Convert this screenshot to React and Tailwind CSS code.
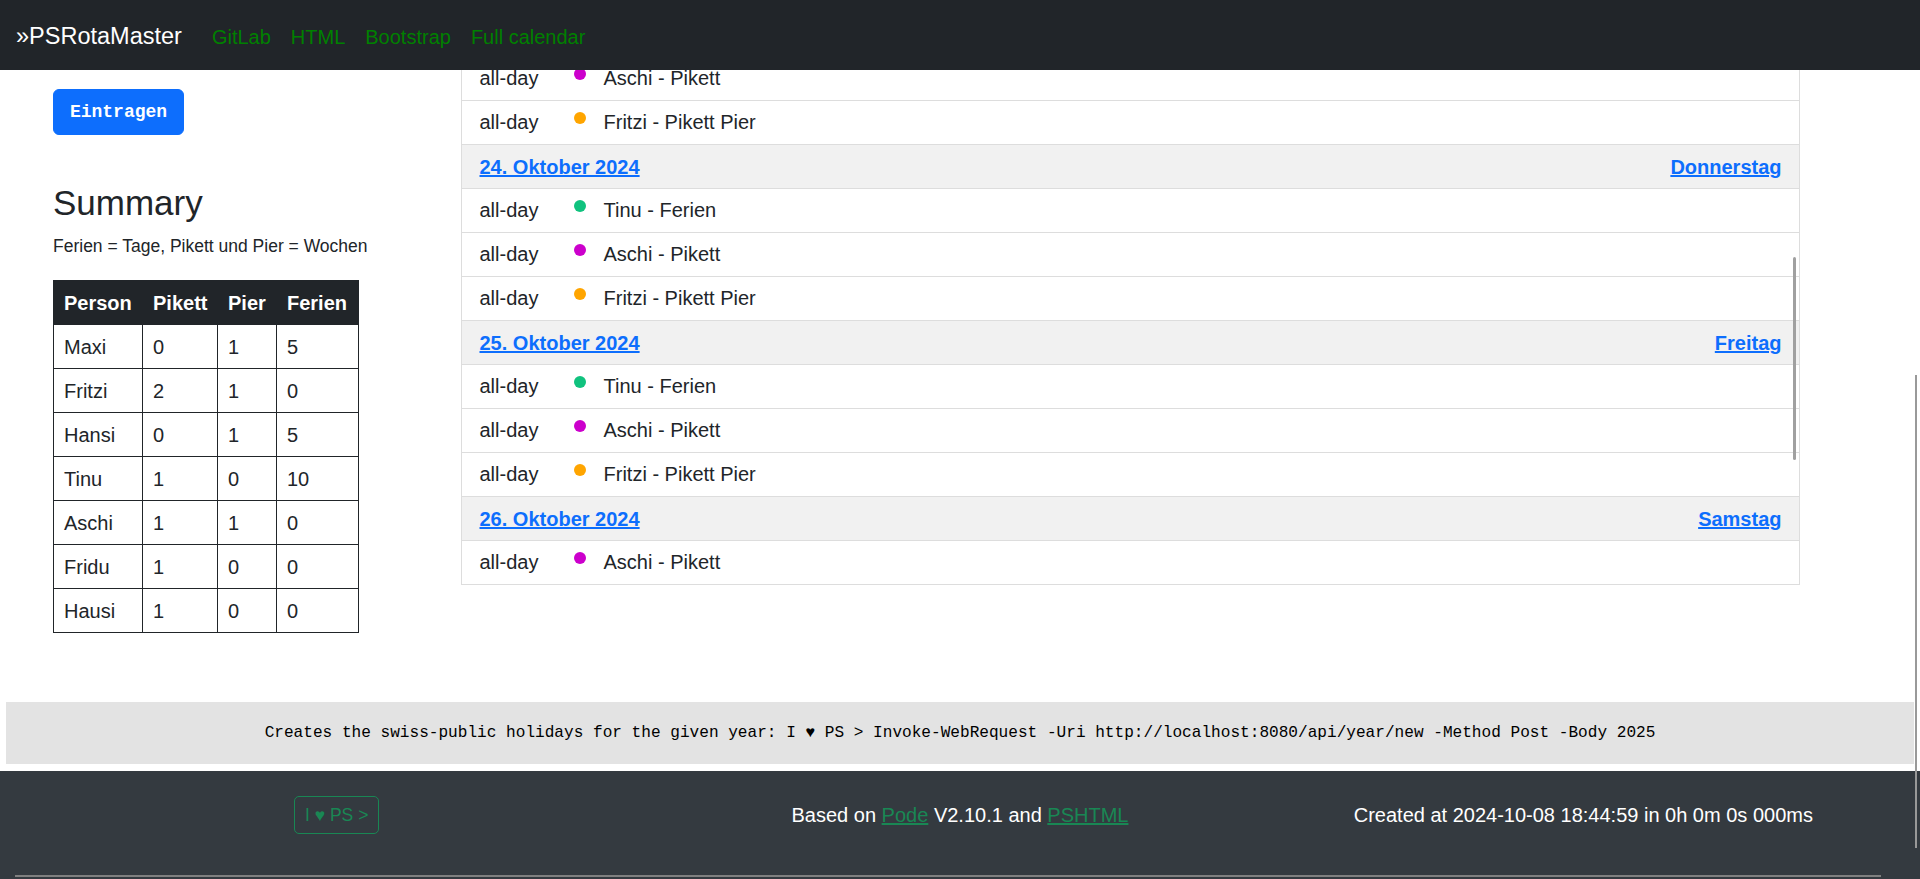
import React from 'react';

const MAGENTA = '#cc00cc';
const ORANGE = '#ffa500';
const GREEN = '#10c27e';

const summary = [
  { name: 'Maxi', pikett: 0, pier: 1, ferien: 5 },
  { name: 'Fritzi', pikett: 2, pier: 1, ferien: 0 },
  { name: 'Hansi', pikett: 0, pier: 1, ferien: 5 },
  { name: 'Tinu', pikett: 1, pier: 0, ferien: 10 },
  { name: 'Aschi', pikett: 1, pier: 1, ferien: 0 },
  { name: 'Fridu', pikett: 1, pier: 0, ferien: 0 },
  { name: 'Hausi', pikett: 1, pier: 0, ferien: 0 },
];

const listRows = [
  { kind: 'event', title: 'Aschi - Pikett', color: MAGENTA },
  { kind: 'event', title: 'Fritzi - Pikett Pier', color: ORANGE },
  { kind: 'day', date: '24. Oktober 2024', weekday: 'Donnerstag' },
  { kind: 'event', title: 'Tinu - Ferien', color: GREEN },
  { kind: 'event', title: 'Aschi - Pikett', color: MAGENTA },
  { kind: 'event', title: 'Fritzi - Pikett Pier', color: ORANGE },
  { kind: 'day', date: '25. Oktober 2024', weekday: 'Freitag' },
  { kind: 'event', title: 'Tinu - Ferien', color: GREEN },
  { kind: 'event', title: 'Aschi - Pikett', color: MAGENTA },
  { kind: 'event', title: 'Fritzi - Pikett Pier', color: ORANGE },
  { kind: 'day', date: '26. Oktober 2024', weekday: 'Samstag' },
  { kind: 'event', title: 'Aschi - Pikett', color: MAGENTA },
];

const Navbar = () => (
  <nav className="relative z-10 flex h-[70px] items-center bg-[#212529] pl-[16px] pt-[4px]">
    <span className="mr-[20px] text-[23.5px] text-white">»PSRotaMaster</span>
    {['GitLab', 'HTML', 'Bootstrap', 'Full calendar'].map((link) => (
      <a key={link} className="px-[10px] text-[20px] text-[#008000]">
        {link}
      </a>
    ))}
  </nav>
);

const SummaryTable = () => (
  <table className="w-[306px] table-fixed border-collapse text-[20px] text-[#212529]">
    <thead>
      <tr className="bg-[#212529] text-white">
        <th className="h-[44px] w-[89px] border border-[#212529] px-[10px] text-left font-bold">Person</th>
        <th className="h-[44px] w-[75px] border border-[#212529] px-[10px] text-left font-bold">Pikett</th>
        <th className="h-[44px] w-[59px] border border-[#212529] px-[10px] text-left font-bold">Pier</th>
        <th className="h-[44px] w-[82px] border border-[#212529] px-[10px] text-left font-bold">Ferien</th>
      </tr>
    </thead>
    <tbody>
      {summary.map((row) => (
        <tr key={row.name}>
          <td className="h-[44px] border border-[#212529] px-[10px]">{row.name}</td>
          <td className="h-[44px] border border-[#212529] px-[10px]">{row.pikett}</td>
          <td className="h-[44px] border border-[#212529] px-[10px]">{row.pier}</td>
          <td className="h-[44px] border border-[#212529] px-[10px]">{row.ferien}</td>
        </tr>
      ))}
    </tbody>
  </table>
);

const CalendarList = () => (
  <div className="relative h-[515px] w-[1339px] overflow-hidden">
    <div className="-mt-[14px] border-x border-b border-[#dddddd]">
      {listRows.map((row, i) =>
        row.kind === 'day' ? (
          <div
            key={i}
            className="flex h-[44px] items-center justify-between border-t border-[#dddddd] bg-[#f1f1f1] px-[17.5px] text-[20px] font-bold text-[#0d6efd]"
          >
            <a className="underline">{row.date}</a>
            <a className="underline">{row.weekday}</a>
          </div>
        ) : (
          <div
            key={i}
            className="flex h-[44px] items-start border-t border-[#dddddd] px-[17.5px] pt-[10px] text-[20px] leading-[23px] text-[#212529]"
          >
            <span className="w-[59px]">all-day</span>
            <span
              className="ml-[35px] mt-[1px] h-[12px] w-[12px] rounded-full"
              style={{ backgroundColor: row.color }}
            />
            <span className="ml-[18px]">{row.title}</span>
          </div>
        )
      )}
    </div>
    <div className="absolute right-[4px] top-[187px] h-[203px] w-[3px] rounded-full bg-[#a0a0a0]" />
  </div>
);

const Footer = () => (
  <footer className="mt-[7px] h-[120px] bg-[#343a40] pt-[25px] text-[20px] text-white">
    <div className="grid grid-cols-3 items-center px-[25px] text-center">
      <div>
        <span className="inline-block rounded-[5px] border border-[#198754] px-[10px] py-[5px] text-[17.5px] leading-[26px] text-[#198754]">
          I ♥ PS &gt;
        </span>
      </div>
      <div>
        Based on <a className="text-[#198754] underline">Pode</a> V2.10.1 and{' '}
        <a className="text-[#198754] underline">PSHTML</a>
      </div>
      <div>Created at 2024-10-08 18:44:59 in 0h 0m 0s 000ms</div>
    </div>
    <div className="ml-[15px] mt-[41px] h-[2px] w-[1866px] bg-[#808080]" />
  </footer>
);

export default function App() {
  return (
    <div className="relative h-[879px] overflow-hidden bg-white font-['Liberation_Sans',Arial,sans-serif]">
      <Navbar />
      <main className="flex items-start pl-[53px]">
        <div className="w-[408px]">
          <button className="mt-[19px] h-[46px] w-[131px] rounded-[6px] border border-[#0d6efd] bg-[#0d6efd] font-['Liberation_Mono',monospace] text-[18px] font-bold text-white">
            Eintragen
          </button>
          <h3 className="mt-[47px] text-[35px] leading-[42px] text-[#212529]">Summary</h3>
          <p className="mt-[10px] text-[17.5px] leading-[24px] text-[#212529]">Ferien = Tage, Pikett und Pier = Wochen</p>
          <div className="mt-[22px]">
            <SummaryTable />
          </div>
        </div>
        <CalendarList />
      </main>
      <div className="mx-[6px] mt-[69px] flex h-[62px] items-center justify-center bg-[#e3e3e3] font-['Liberation_Mono','DejaVu_Sans_Mono',monospace] text-[16.1px] text-black">
        Creates the swiss-public holidays for the given year: I ♥ PS &gt; Invoke-WebRequest -Uri http://localhost:8080/api/year/new -Method Post -Body 2025
      </div>
      <Footer />
      <div className="absolute right-[3px] top-[375px] h-[473px] w-[2px] bg-[#999999]" />
    </div>
  );
}
